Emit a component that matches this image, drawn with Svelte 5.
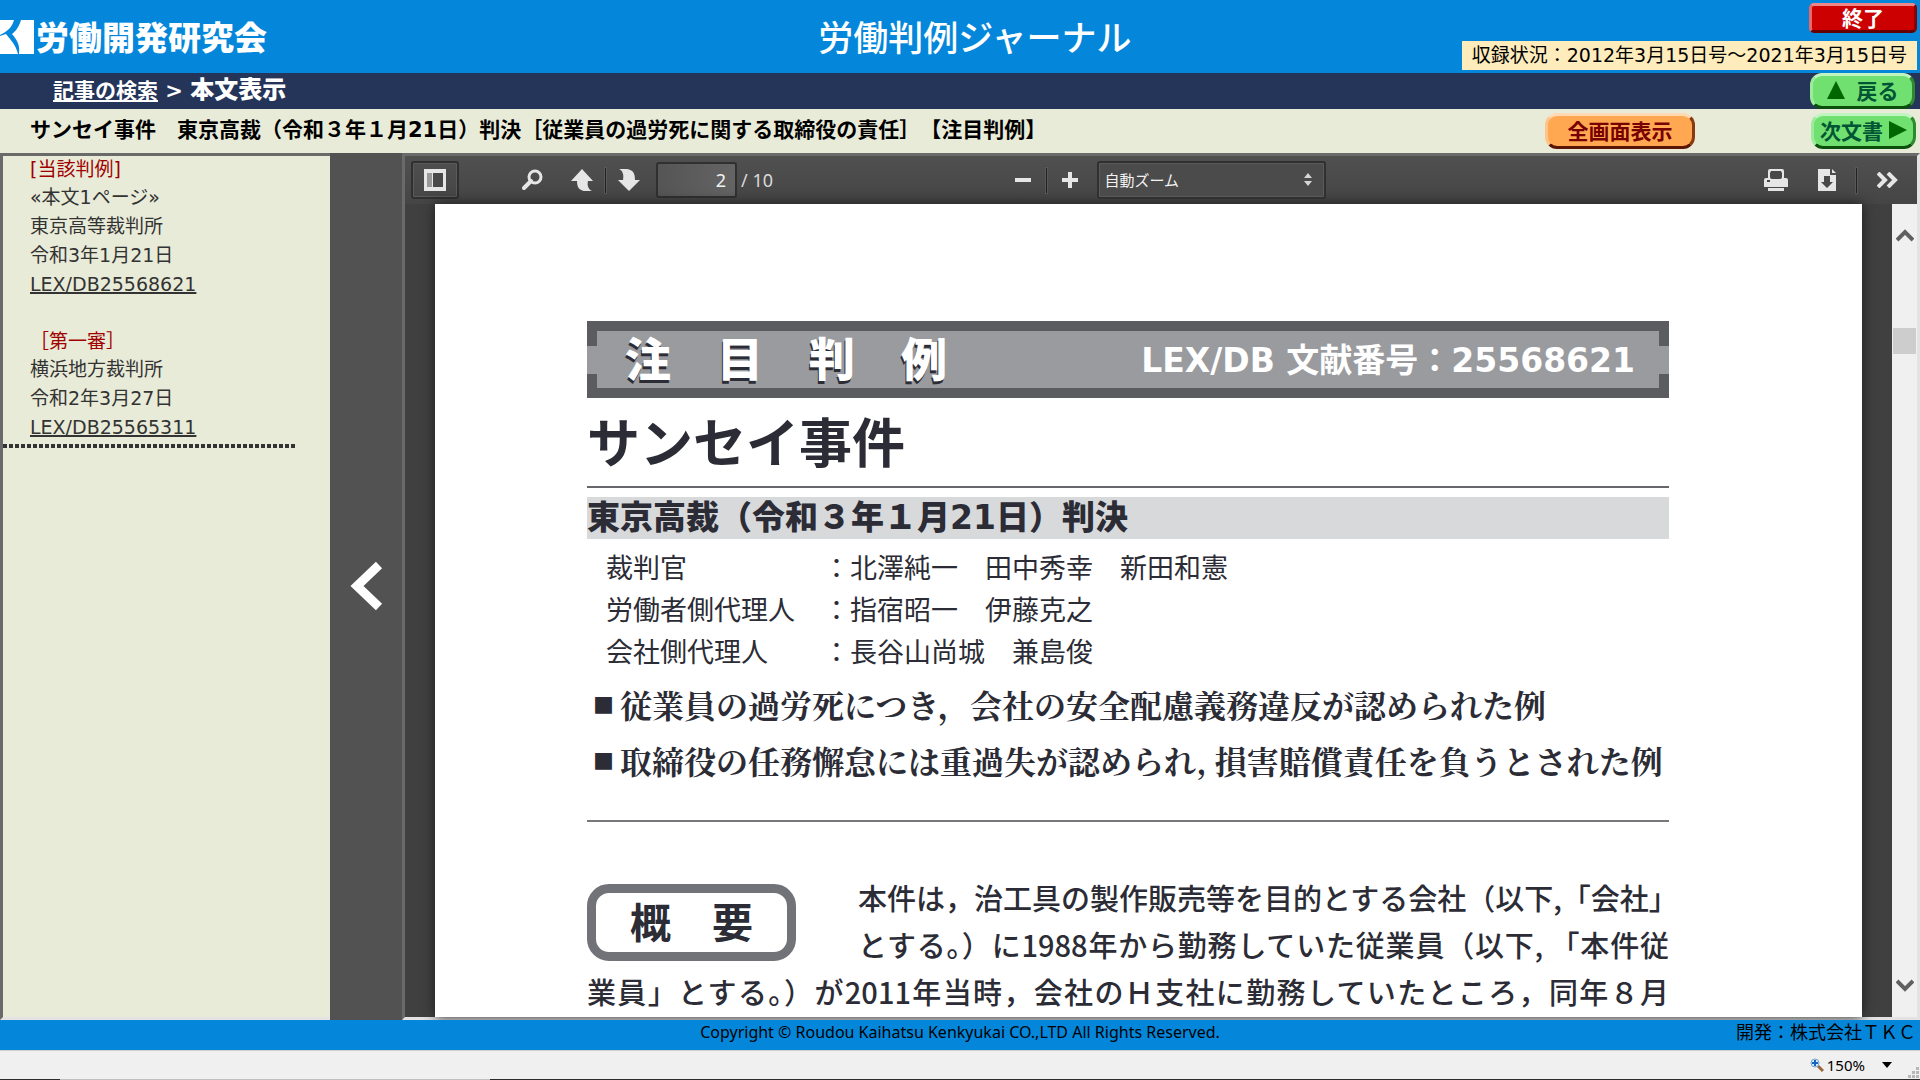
<script>
  const cases = [
    {
      label: '[当該判例]',
      lines: ['«本文1ページ»', '東京高等裁判所', '令和3年1月21日'],
      id: 'LEX/DB25568621'
    },
    {
      label: '［第一審］',
      lines: ['横浜地方裁判所', '令和2年3月27日'],
      id: 'LEX/DB25565311'
    }
  ];

  const people = [
    { role: '裁判官', names: '北澤純一　田中秀幸　新田和憲' },
    { role: '労働者側代理人', names: '指宿昭一　伊藤克之' },
    { role: '会社側代理人', names: '長谷山尚城　兼島俊' }
  ];

  const points = [
    '従業員の過労死につき，会社の安全配慮義務違反が認められた例',
    '取締役の任務懈怠には重過失が認められ, 損害賠償責任を負うとされた例'
  ];

  let page = $state('2');
  let zoom = $state('auto');
  let sidebarOpen = $state(true);
</script>

<div class="app">
  <header>
    <div class="logo">
      <svg width="36" height="36" viewBox="0 0 36 36" aria-hidden="true">
        <path d="M0 1H14C12 8 8 12 0 16Z" fill="#fff" />
        <path d="M0 17L6 15C10 20 16 26 18 35H0Z" fill="#fff" />
        <path d="M21 1H34V35H19C20 27 18 22 12 15C17 11 19 7 21 1Z" fill="#fff" />
      </svg>
      <span>労働開発研究会</span>
    </div>
    <h1>労働判例ジャーナル</h1>
    <div class="header-right">
      <button class="exit">終了</button>
      <div class="period">収録状況：2012年3月15日号～2021年3月15日号</div>
    </div>
  </header>

  <nav>
    <div class="crumbs"><a href="#search">記事の検索</a> &gt; <strong>本文表示</strong></div>
    <button class="green">
      <svg width="18" height="18" viewBox="0 0 18 18" aria-hidden="true"><path d="M9 0L18 18H0Z" fill="#060" /></svg>
      戻る
    </button>
  </nav>

  <div class="doc-title">
    <h2>サンセイ事件　東京高裁（令和３年１月21日）判決［従業員の過労死に関する取締役の責任］【注目判例】</h2>
    <button class="orange">全画面表示</button>
    <button class="green next">
      次文書
      <svg width="18" height="18" viewBox="0 0 18 18" aria-hidden="true"><path d="M0 0L18 9L0 18Z" fill="#060" /></svg>
    </button>
  </div>

  <main>
    {#if sidebarOpen}
      <aside>
        {#each cases as item}
          <section>
            <h3>{item.label}</h3>
            {#each item.lines as line}
              <p>{line}</p>
            {/each}
            <p><a href="#{item.id}">{item.id}</a></p>
          </section>
        {/each}
        <div class="dots"></div>
      </aside>
    {/if}

    <button class="fold" aria-label="サイドバーを閉じる" onclick={() => (sidebarOpen = !sidebarOpen)}>
      <svg width="34" height="50" viewBox="0 0 34 50" aria-hidden="true">
        <path d="M30 4L8 25L30 46" fill="none" stroke="#fff" stroke-width="9" />
      </svg>
    </button>

    <div class="viewer">
      <div class="toolbar">
        <div class="group">
          <button class="toggle" aria-label="サイドバー表示">
            <svg width="22" height="22" viewBox="0 0 22 22">
              <path d="M0 0H22V22H0Z" fill="#e6e6e6" />
              <path d="M3 4H8V18H3Z" fill="#999" />
              <path d="M9 4H19V18H9Z" fill="#484848" />
            </svg>
          </button>
          <button class="tool find" aria-label="検索">
            <svg width="22" height="22" viewBox="0 0 22 22">
              <circle cx="13" cy="8" r="6" fill="none" stroke="#e6e6e6" stroke-width="3" />
              <path d="M9 12L2 19" stroke="#e6e6e6" stroke-width="4" stroke-linecap="round" />
            </svg>
          </button>
          <button class="tool prev" aria-label="前のページ">
            <svg width="22" height="22" viewBox="0 0 22 22">
              <path d="M11 0L22 12H17C16 16 17 20 21 22H13C8 21 6 18 6 12H0Z" fill="#e6e6e6" />
            </svg>
          </button>
          <span class="sep"></span>
          <button class="tool" aria-label="次のページ">
            <svg width="22" height="22" viewBox="0 0 22 22">
              <path d="M11 22L22 11H17C17 4 15 1 9 0H1C5 2 6 6 5 11H0Z" fill="#e6e6e6" />
            </svg>
          </button>
          <input id="page" bind:value={page} />
          <label for="page">/ 10</label>
        </div>
        <div class="group middle">
          <button class="tool" aria-label="縮小">
            <svg width="16" height="16" viewBox="0 0 16 16"><path d="M0 6H16V10H0Z" fill="#e6e6e6" /></svg>
          </button>
          <span class="sep"></span>
          <button class="tool" aria-label="拡大">
            <svg width="16" height="16" viewBox="0 0 16 16">
              <path d="M6 0H10V6H16V10H10V16H6V10H0V6H6Z" fill="#e6e6e6" />
            </svg>
          </button>
          <div class="zoom">
            <select bind:value={zoom} aria-label="ズーム">
              <option value="auto">自動ズーム</option>
              <option value="100">100%</option>
              <option value="150">150%</option>
            </select>
            <svg width="8" height="14" viewBox="0 0 8 14" aria-hidden="true">
              <path d="M4 0L8 5H0ZM4 13L0 8H8Z" fill="#d6d6d6" />
            </svg>
          </div>
        </div>
        <div class="group end">
          <button class="tool" aria-label="印刷">
            <svg width="24" height="22" viewBox="0 0 24 22">
              <path d="M4 10V2Q4 0 6 0H18Q20 0 20 2V10" fill="#e6e6e6" />
              <path d="M2 9H22Q24 9 24 11V18H0V11Q0 9 2 9Z" fill="#e6e6e6" />
              <path d="M7 2H17L18 4V8Q18 10 16 10H8Q6 10 6 8V4Z" fill="#484848" />
              <path d="M3 11H6V13H3ZM6 18H18V19H6Z" fill="#484848" />
              <path d="M4 19H20V22H4Z" fill="#e6e6e6" />
            </svg>
          </button>
          <button class="tool" aria-label="ダウンロード">
            <svg width="18" height="22" viewBox="0 0 18 22">
              <path d="M0 0H12V6H18V22H0ZM14 0L18 4H14Z" fill="#e6e6e6" />
              <path d="M6 7H12V13H15L9 19L3 13H6Z" fill="#484848" />
            </svg>
          </button>
          <span class="sep"></span>
          <button class="tool" aria-label="ツール">
            <svg width="22" height="16" viewBox="0 0 22 16">
              <path d="M1 1L8 8L1 15M11 1L18 8L11 15" fill="none" stroke="#e6e6e6" stroke-width="4" />
            </svg>
          </button>
        </div>
      </div>

      <div class="canvas">
        <article>
          <div class="banner">
            <span class="kind">注　目　判　例</span>
            <span class="number">LEX/DB 文献番号：25568621</span>
          </div>
          <h2>サンセイ事件</h2>
          <h3>東京高裁（令和３年１月21日）判決</h3>
          <dl>
            {#each people as person}
              <dt>{person.role}</dt>
              <dd>：{person.names}</dd>
            {/each}
          </dl>
          <ul>
            {#each points as point}
              <li><span class="mark">■</span>{point}</li>
            {/each}
          </ul>
          <div class="summary">
            <h4>概　要</h4>
            <div class="beside">
              <p>本件は，治工具の製作販売等を目的とする会社（以下,「会社」</p>
              <p>とする。）に1988年から勤務していた従業員（以下, 「本件従</p>
            </div>
          </div>
          <p>業員」とする。）が2011年当時，会社のＨ支社に勤務していたところ，同年８月</p>
        </article>
        <div class="scrollbar">
          <svg width="18" height="14" viewBox="0 0 18 14"><path d="M1 12L9 4L17 12" fill="none" stroke="#606060" stroke-width="4" /></svg>
          <div class="thumb"></div>
          <svg class="down" width="18" height="14" viewBox="0 0 18 14"><path d="M1 2L9 10L17 2" fill="none" stroke="#606060" stroke-width="4" /></svg>
        </div>
      </div>
    </div>
  </main>

  <footer>
    <span class="copy">Copyright © Roudou Kaihatsu Kenkyukai CO.,LTD All Rights Reserved.</span>
    <span class="maker">開発：株式会社ＴＫＣ</span>
  </footer>

  <div class="statusbar">
    <svg width="14" height="14" viewBox="0 0 14 14" aria-hidden="true">
      <path d="M8 8L13 13" stroke="#a0673c" stroke-width="3" />
      <circle cx="5" cy="5" r="4" fill="#d8ecfb" stroke="#7ba3c8" />
      <path d="M5 2V8M2 5H8" stroke="#1565c0" stroke-width="2" />
    </svg>
    <span>150%</span>
    <svg class="caret" width="10" height="6" viewBox="0 0 10 6" aria-hidden="true"><path d="M0 0H10L5 6Z" /></svg>
    <svg class="grip" width="12" height="12" viewBox="0 0 12 12" aria-hidden="true">
      <path d="M8 0H11V3H8ZM4 4H7V7H4ZM8 4H11V7H8ZM0 8H3V11H0ZM4 8H7V11H4ZM8 8H11V11H8Z" fill="#b8b8b8" />
    </svg>
  </div>
</div>

<style>
  :global(body) {
    margin: 0;
    overflow: hidden;
  }

  .app {
    display: flex;
    flex-direction: column;
    height: 100vh;
    font-family: 'DejaVu Sans', 'Noto Sans CJK JP', sans-serif;
    font-size: 19px;
    color: #000;
    background: #e9ebd9;
  }

  h1, h2, h3, h4, p, ul, dl, dd {
    margin: 0;
    padding: 0;
  }

  button {
    font-family: 'Noto Sans CJK JP', sans-serif;
    font-size: 21px;
    font-weight: bold;
    line-height: 1;
    padding: 0 0 2px;
    cursor: pointer;
  }

  /* header */
  header {
    display: grid;
    grid-template-columns: 1fr auto 1fr;
    height: 73px;
    flex-shrink: 0;
    background: #0487db;
    color: #fff;
  }

  .logo {
    display: flex;
    align-items: center;
    font-family: 'Noto Sans CJK JP', sans-serif;
    font-size: 33px;
    font-weight: 900;
    line-height: 73px;
  }

  h1 {
    font-family: 'Noto Sans CJK JP', sans-serif;
    font-size: 35px;
    font-weight: 500;
    line-height: 71px;
    padding-left: 30px;
  }

  .header-right {
    display: flex;
    flex-direction: column;
    align-items: flex-end;
    gap: 8px;
    padding: 3px 3px 0 0;
  }

  .exit {
    width: 108px;
    height: 30px;
    color: #fff;
    background: #c00;
    border: 3px solid;
    border-color: #e88 #800 #600 #e66;
    border-radius: 5px;
  }

  .period {
    padding: 0 10px;
    line-height: 29px;
    color: #000;
    background: #ffecbd;
    white-space: nowrap;
  }

  /* breadcrumb */
  nav {
    display: flex;
    align-items: center;
    justify-content: space-between;
    height: 36px;
    flex-shrink: 0;
    padding: 0 5px 0 53px;
    color: #fff;
    background: #253559;
  }

  .crumbs {
    font-size: 21px;
    font-weight: bold;
    line-height: 32px;
    padding-bottom: 2px;
  }

  .crumbs strong {
    font-size: 24px;
  }

  .crumbs a {
    color: #fff;
  }

  .green, .orange {
    display: flex;
    align-items: center;
    justify-content: center;
    gap: 12px;
    width: 105px;
    height: 36px;
    border: 3px solid;
    border-radius: 12px;
  }

  .green {
    color: #053;
    background: #70e070;
    border-color: #c0f5c0 #2f8a2f #0a500a #9ceb9c;
  }

  .next {
    gap: 6px;
  }

  .orange {
    width: 150px;
    color: #700;
    background: #ffa851;
    border-color: #ffd9b3 #8a3a10 #5a1505 #ffc48a;
  }

  .doc-title {
    display: flex;
    align-items: center;
    height: 44px;
    flex-shrink: 0;
    padding: 0 4px 0 30px;
  }

  .doc-title h2 {
    flex: 1;
    font-size: 21px;
    line-height: 40px;
    padding-bottom: 2px;
    text-spacing-trim: space-all;
    white-space: nowrap;
  }

  .doc-title .orange {
    margin-right: 116px;
  }

  /* frames */
  main {
    display: flex;
    flex: 1;
    min-height: 0;
    background: #0487db;
  }

  aside {
    box-sizing: border-box;
    width: 330px;
    flex-shrink: 0;
    border: 3px solid;
    border-color: #6a6a6a transparent #e3e3e3 #6a6a6a;
    border-right: 0;
    color: #333;
    background: #e9ebd9;
    line-height: 29px;
  }

  aside section {
    padding-left: 27px;
  }

  aside section + section {
    margin-top: 29px;
  }

  aside h3 {
    font-size: 19px;
    font-weight: normal;
    line-height: 27px;
    color: #a00000;
  }

  aside a {
    color: #333;
    text-decoration-thickness: 2px;
  }

  .dots {
    width: 293px;
    height: 4px;
    margin-top: 2px;
    background: repeating-linear-gradient(90deg, #333 0 4px, transparent 4px 6px);
  }

  .fold {
    width: 72px;
    flex-shrink: 0;
    padding: 0;
    border: 0;
    background: #525252;
  }

  .viewer {
    display: flex;
    flex-direction: column;
    flex: 1;
    min-width: 0;
    border: 3px solid;
    border-color: #6a6a6a #e3e3e3 #e3e3e3 #6a6a6a;
    background: #404040;
  }

  .toolbar {
    display: grid;
    grid-template-columns: 1fr auto 1fr;
    align-items: center;
    height: 48px;
    flex-shrink: 0;
    padding: 0 18px 0 6px;
    background: linear-gradient(#505050, #454545);
    color: #d9d9d9;
    font-family: 'Noto Sans', 'Noto Sans CJK JP', sans-serif;
    font-size: 18px;
  }

  .group {
    display: flex;
    align-items: center;
    gap: 12px;
  }

  .group.middle {
    gap: 15px;
    padding-left: 30px;
  }

  .group.end {
    justify-content: flex-end;
    gap: 20px;
  }

  .group.end .tool:first-child {
    margin-right: 10px;
  }

  .tool, .toggle {
    display: flex;
    align-items: center;
    justify-content: center;
    padding: 0;
    border: 0;
    background: none;
  }

  .toggle {
    width: 48px;
    height: 38px;
    border: 2px solid #303030;
    border-radius: 3px;
    box-shadow: inset 0 0 0 1px #5a5a5a;
  }

  .find {
    margin-left: 51px;
  }

  .prev {
    margin-left: 15px;
  }

  .sep {
    width: 1px;
    height: 25px;
    background: #222;
    box-shadow: 0 0 0 1px #585858;
  }

  .group input {
    box-sizing: border-box;
    width: 81px;
    height: 36px;
    margin-left: 4px;
    padding: 0 9px;
    border: 2px solid #303030;
    border-radius: 3px;
    background: linear-gradient(90deg, #555, #646464);
    color: #f2f2f2;
    font: inherit;
    text-align: right;
  }

  .group label {
    margin-left: -8px;
  }

  .zoom {
    position: relative;
    margin-left: 4px;
  }

  .zoom select {
    display: block;
    appearance: none;
    width: 229px;
    height: 38px;
    padding: 0 6px;
    border: 2px solid #303030;
    border-radius: 3px;
    box-shadow: inset 0 0 0 1px #5a5a5a;
    background: #4b4b4b;
    color: #f2f2f2;
    font-family: inherit;
    font-size: 15px;
  }

  .zoom svg {
    position: absolute;
    right: 14px;
    top: 12px;
    pointer-events: none;
  }

  .canvas {
    display: flex;
    flex: 1;
    min-height: 0;
    padding-left: 30px;
    background: #404040;
  }

  article {
    box-sizing: border-box;
    flex: 1;
    min-width: 0;
    margin-right: 30px;
    padding: 117px 193px 0 152px;
    overflow: hidden;
    background: #fff;
    box-shadow: 0 0 12px #1c1c1c;
    color: #2b2c35;
    font-family: 'Noto Sans CJK JP', sans-serif;
    white-space: nowrap;
  }

  .banner {
    position: relative;
    box-sizing: border-box;
    display: flex;
    align-items: center;
    justify-content: space-between;
    height: 77px;
    padding: 0 24px 4px 28px;
    border: 10px solid #5b5c60;
    background: #9a9b9f;
    color: #fff;
    font-weight: bold;
  }

  /* gaps in the frame at both ends */
  .banner::before, .banner::after {
    content: '';
    position: absolute;
    top: 15px;
    width: 10px;
    height: 28px;
    background: #9a9b9f;
  }

  .banner::before {
    left: -10px;
  }

  .banner::after {
    right: -10px;
  }

  .kind {
    font-size: 46px;
    font-weight: 900;
    line-height: 52px;
    padding-bottom: 4px;
    text-shadow: -1px 3px 0 #2b2c35;
  }

  .number {
    font-family: 'DejaVu Sans', 'Noto Sans CJK JP', sans-serif;
    font-size: 33px;
  }

  article h2 {
    font-size: 53px;
    line-height: 84px;
    padding-bottom: 4px;
    border-bottom: 2px solid #66676c;
  }

  article h3 {
    margin-top: 9px;
    font-family: 'DejaVu Sans', 'Noto Sans CJK JP', sans-serif;
    font-size: 33px;
    font-weight: 900;
    line-height: 42px;
    background: #d8d9db;
  }

  dl {
    display: grid;
    grid-template-columns: 217px 1fr;
    margin-top: 7px;
    padding-left: 19px;
    font-size: 27px;
    line-height: 42px;
  }

  ul {
    margin-top: 4px;
    padding-bottom: 32px;
    border-bottom: 2px solid #77787c;
    list-style: none;
    font-family: 'Noto Serif CJK JP', 'Noto Sans CJK JP', serif;
    font-size: 32px;
    font-weight: bold;
    line-height: 56px;
  }

  li {
    display: flex;
    align-items: center;
    padding-left: 6px;
  }

  .mark {
    width: 27px;
    font-size: 21px;
  }

  .summary {
    display: flex;
    justify-content: space-between;
    align-items: flex-start;
    margin-top: 52px;
  }

  h4 {
    margin-top: 10px;
    padding: 0 34px 4px;
    border: 9px solid #727378;
    border-radius: 22px;
    font-size: 41px;
    line-height: 55px;
  }

  .beside {
    width: 811px;
  }

  article p {
    font-size: 29px;
    font-weight: 500;
    line-height: 47px;
    text-align-last: justify;
  }

  .scrollbar {
    display: flex;
    flex-direction: column;
    align-items: center;
    width: 25px;
    padding: 24px 0;
    background: #f0f0f0;
  }

  .thumb {
    width: 23px;
    height: 26px;
    margin-top: 86px;
    background: #cdcdcd;
  }

  .down {
    margin-top: auto;
  }

  /* bottom */
  footer {
    display: grid;
    grid-template-columns: 1fr auto 1fr;
    height: 30px;
    flex-shrink: 0;
    padding: 0 4px;
    line-height: 25px;
    background: #0487db;
  }

  .copy {
    grid-column: 2;
    font-family: 'Noto Sans', sans-serif;
    font-size: 16px;
  }

  .maker {
    font-size: 18px;
    text-align: right;
  }

  .statusbar {
    position: relative;
    box-sizing: border-box;
    display: flex;
    align-items: center;
    justify-content: flex-end;
    gap: 3px;
    height: 30px;
    flex-shrink: 0;
    padding: 0 28px 2px 0;
    border-top: 1px solid #d0d0d0;
    background: linear-gradient(90deg, #2b2b2b 0 60px, #c0c0c0 60px 490px, #2b2b2b 490px) bottom / 100% 1px no-repeat #f0f0f0;
    font-family: 'Noto Sans', sans-serif;
    font-size: 15px;
  }

  .caret {
    margin-left: 14px;
  }

  .grip {
    position: absolute;
    right: 0;
    bottom: 1px;
  }
</style>
